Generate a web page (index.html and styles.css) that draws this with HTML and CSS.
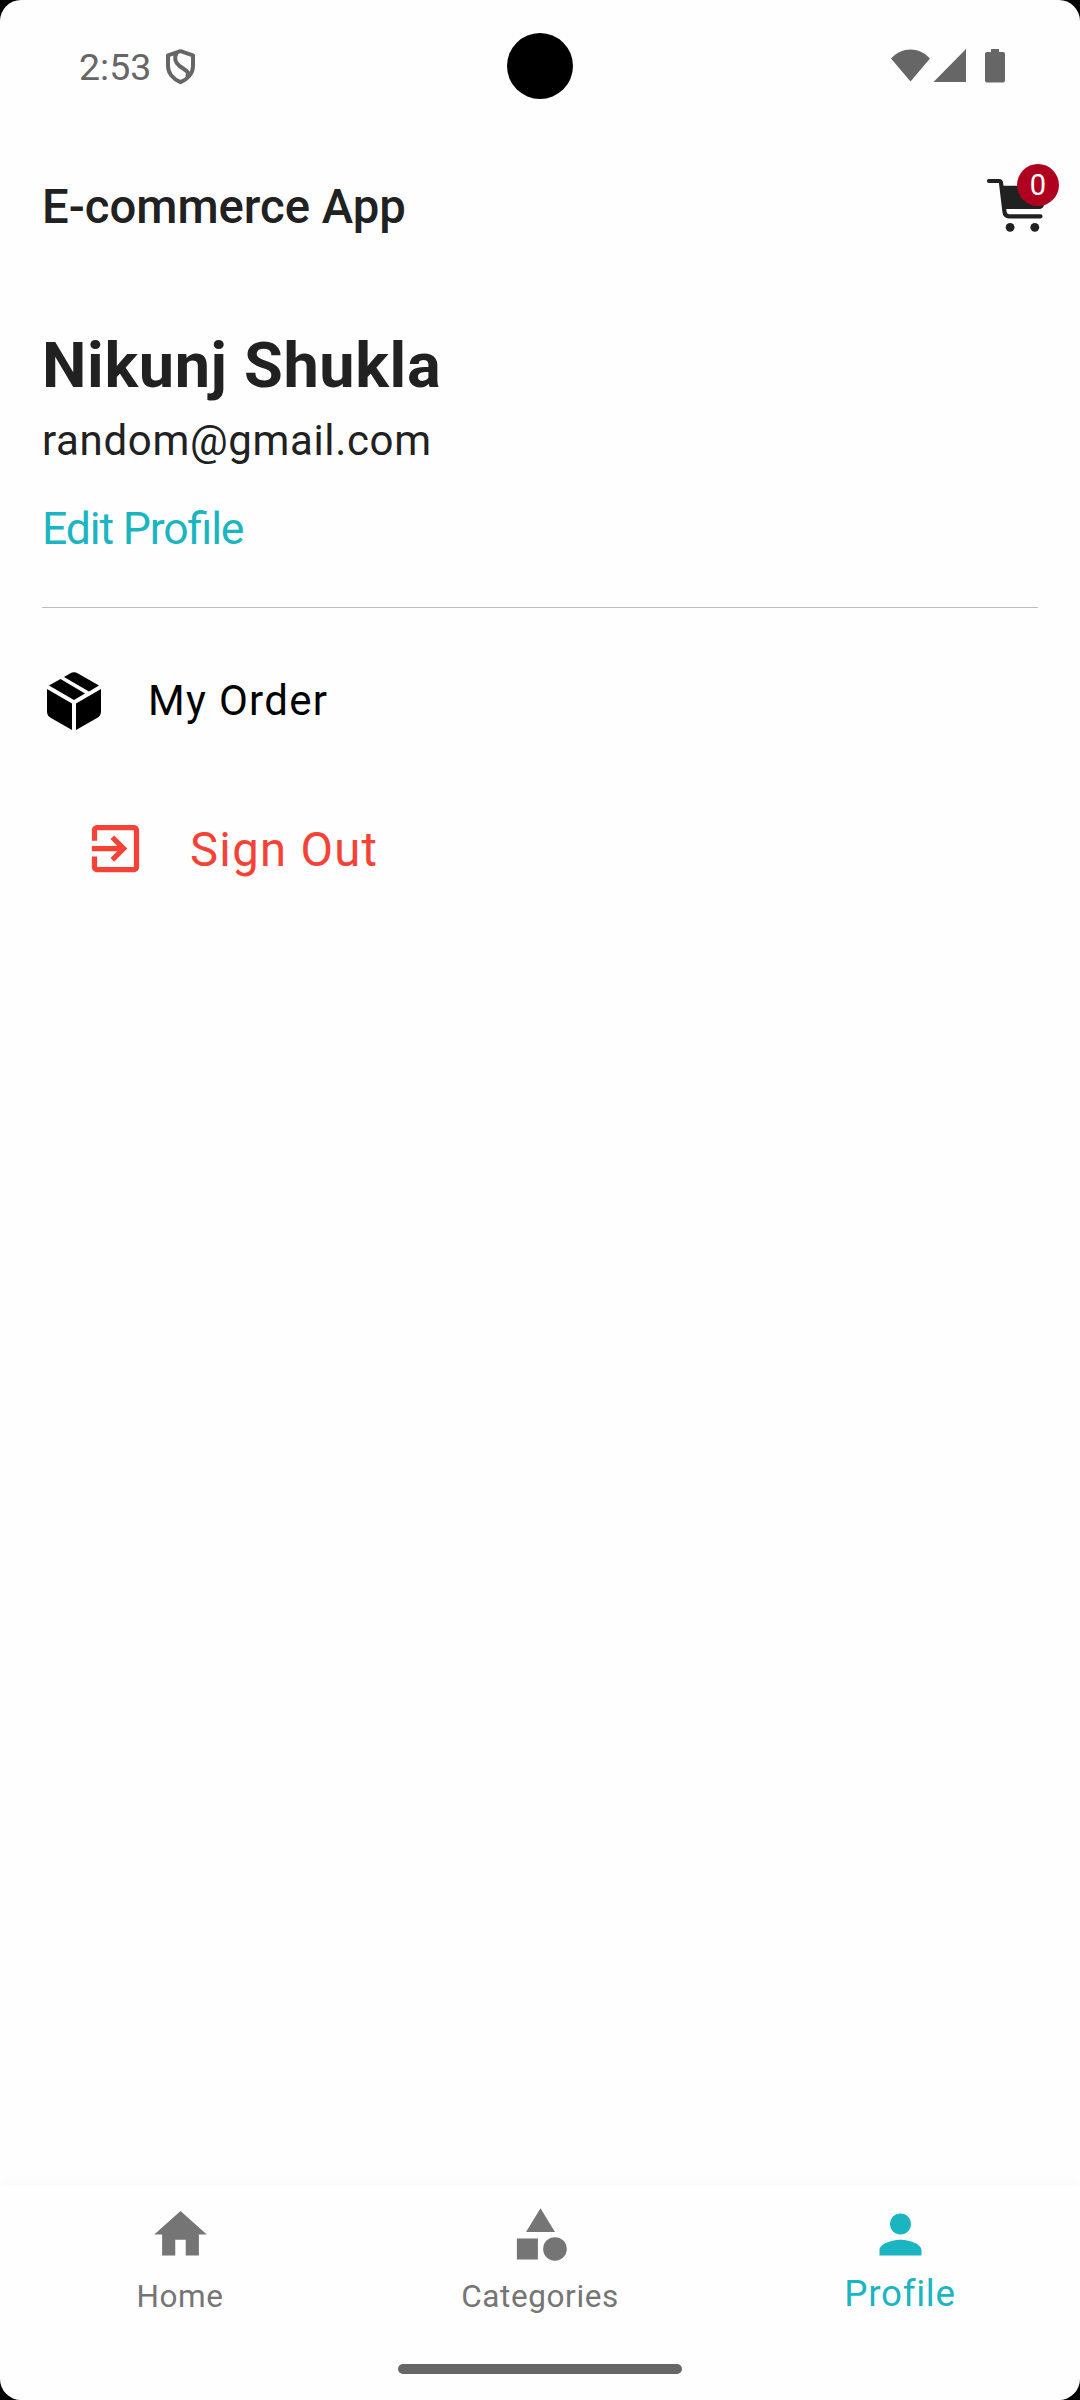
FILE: index.html
```
<!DOCTYPE html>
<html lang="en">
<head>
<meta charset="utf-8">
<title>E-commerce App</title>
<link rel="stylesheet" href="styles.css">
</head>
<body>
<div class="screen">
  <header class="status">
    <div class="status-side">
      <span class="time">2:53</span>
      <svg class="shield" viewBox="0 0 30 36" width="30" height="36"><path d="M14.500 2.200 27 6.300V17c0 7-5 13-12.500 16.200C7 30 2 24 2 17V6.300Z" /><path d="M10.500 4C8 9 8.500 13 13.500 17C20 21.500 24 23 21 28" /></svg>
    </div>
    <div class="camera"></div>
    <div class="status-side status-right">
      <svg viewBox="0 0 116 36" width="116" height="36"><path d="M0 10.500C11-1.500 28-1.500 39 10.500L19.500 33.500Z"/><path d="M42.500 34 75 1V34Z"/><path d="M100 1h8v3h4a2 2 0 0 1 2 2v26.500a2 2 0 0 1-2 2H96a2 2 0 0 1-2-2V6a2 2 0 0 1 2-2h4Z"/></svg>
    </div>
  </header>

  <div class="appbar">
    <h1 class="title">E-commerce App</h1>
    <div class="cart">
      <svg viewBox="0 0 64 56" width="64" height="56"><path class="cart-line" d="M3 11H13.200Q14.800 11 15 12.800L18.500 42Q19 46.300 23 46.300H54.500"/><path d="M14 15.700H61L58.300 34Q57.500 39 53 39H18Z"/><circle cx="24.100" cy="57.300" r="4.400"/><circle cx="48.800" cy="57.300" r="4.400"/></svg>
      <span class="badge">0</span>
    </div>
  </div>

  <main class="content">
    <h2 class="name">Nikunj Shukla</h2>
    <p class="email">random@gmail.com</p>
    <a class="edit">Edit Profile</a>
    <hr class="divider">
    <div class="order">
      <svg viewBox="0 0 54 58" width="54" height="58"><path d="M0 17 25 31.500V58L4 46Q0 43.500 0 39.500Z"/><path d="M54 17 29 31.500V58L50 46Q54 43.500 54 39.500Z"/><path d="M2 13.500 13.500 7 38 21.500 27 28Z"/><path d="M17 5 23 1.500Q27-.8 31 1.500L52 13.500 42 19.500Z"/></svg>
      <span>My Order</span>
    </div>
    <div class="signout">
      <svg viewBox="0 0 24 24" width="63" height="63"><path d="M10.090 15.590 11.500 17l5-5-5-5-1.410 1.410L12.670 11H3v2h9.670zM19 3H5c-1.110 0-2 .9-2 2v4h2V5h14v14H5v-4H3v4c0 1.100.89 2 2 2h14c1.100 0 2-.9 2-2V5c0-1.100-.9-2-2-2z"/></svg>
      <span>Sign Out</span>
    </div>
  </main>

  <nav class="nav">
    <a class="tab">
      <svg viewBox="0 0 24 24" width="63" height="63"><path d="M10 20v-6h4v6h5v-8h3L12 3 2 12h3v8z"/></svg>
      <span class="label">Home</span>
    </a>
    <a class="tab">
      <svg viewBox="0 0 24 24" width="63" height="63"><path d="M12 2l-5.500 9h11zM3 13.500h8v8H3z"/><circle cx="17.500" cy="17.500" r="4.500"/></svg>
      <span class="label">Categories</span>
    </a>
    <a class="tab active">
      <svg viewBox="0 0 24 24" width="63" height="63"><path d="M12 12c2.210 0 4-1.790 4-4s-1.790-4-4-4-4 1.790-4 4 1.790 4 4 4zm0 2c-2.670 0-8 1.340-8 4v2h16v-2c0-2.660-5.330-4-8-4z"/></svg>
      <span class="label">Profile</span>
    </a>
  </nav>
  <footer class="gesture"><div class="handle"></div></footer>
</div>
</body>
</html>
```
FILE: styles.css
```
* { box-sizing: border-box; margin: 0; padding: 0; }
body { background: #000; font-family: Roboto, sans-serif; color: #212121; }
svg { display: block; flex: none; overflow: visible; fill: currentColor; }

.screen {
  width: 1080px;
  height: 2400px;
  display: flex;
  flex-direction: column;
  overflow: hidden;
  border-radius: 21px;
  background: #fefefe;
}

.status {
  height: 132px;
  display: grid;
  grid-template-columns: 1fr 66px 1fr;
  align-items: center;
  color: #666;
}
.status-side { display: flex; align-items: center; padding-left: 79px; }
.time { width: 87px; font-size: 37.500px; line-height: 44px; margin-top: 1px; white-space: nowrap; }
.shield { fill: none; stroke: currentColor; stroke-width: 4; stroke-linejoin: round; margin-top: 2px; }
.status-right { justify-content: flex-end; padding: 0 73px 0 0; }
.camera { width: 66px; height: 66px; border-radius: 50%; background: #000; }

.appbar {
  height: 147px;
  display: flex;
  align-items: center;
  justify-content: space-between;
  padding: 0 30px 0 42px;
}
.title { font-size: 47.250px; font-weight: 500; line-height: 56px; margin-top: 3px; }
.cart { position: relative; width: 64px; height: 71px; }
.cart-line { fill: none; stroke: currentColor; stroke-width: 4.200; stroke-linecap: round; }
.badge {
  position: absolute;
  left: 31px;
  top: -6.500px;
  width: 42px;
  height: 42px;
  border-radius: 50%;
  background: #b00020;
  color: #fff;
  font-size: 29px;
  line-height: 42px;
  text-align: center;
}

.content { flex: 1; display: flex; flex-direction: column; align-items: flex-start; padding: 49px 42px 0; }
.name { font-size: 63px; line-height: 76px; font-weight: 700; letter-spacing: .650px; }
.email { font-size: 42px; line-height: 50px; margin-top: 12px; letter-spacing: .660px; }
.edit {
  font-size: 44.600px;
  line-height: 52px;
  margin-top: 37px;
  color: #1bb5c2;
  letter-spacing: -1.150px;
  font-feature-settings: "liga" 1;
}
.divider { align-self: stretch; height: 1px; border: 0; background: #bdbdbd; margin-top: 52px; }
.order {
  height: 60px;
  display: flex;
  align-items: center;
  gap: 47px;
  margin-top: 63px;
  padding-left: 5px;
  color: #000;
  font-size: 42px;
  letter-spacing: 1.310px;
}
.order span { margin-top: -2px; }
.signout {
  height: 63px;
  display: flex;
  align-items: center;
  gap: 43px;
  margin-top: 86px;
  padding-left: 42px;
  color: #f44336;
  font-size: 47.250px;
  letter-spacing: 1.310px;
}
.signout span { margin-top: 2px; }

.nav {
  height: 148px;
  display: grid;
  grid-template-columns: repeat(3, 1fr);
  box-shadow: 0 -4px 12px rgba(0, 0, 0, .02);
}
.tab { display: flex; flex-direction: column; align-items: center; padding-top: 18px; color: #757575; }
.label { font-size: 31.500px; line-height: 38px; margin-top: 12px; letter-spacing: .600px; }
.active { color: #1bb5c2; }
.active .label { font-size: 36.750px; line-height: 44px; margin-top: 6px; letter-spacing: .700px; }

.gesture { height: 67px; display: flex; justify-content: center; padding-top: 31px; }
.handle { width: 284px; height: 10px; border-radius: 5px; background: #666; }
```
